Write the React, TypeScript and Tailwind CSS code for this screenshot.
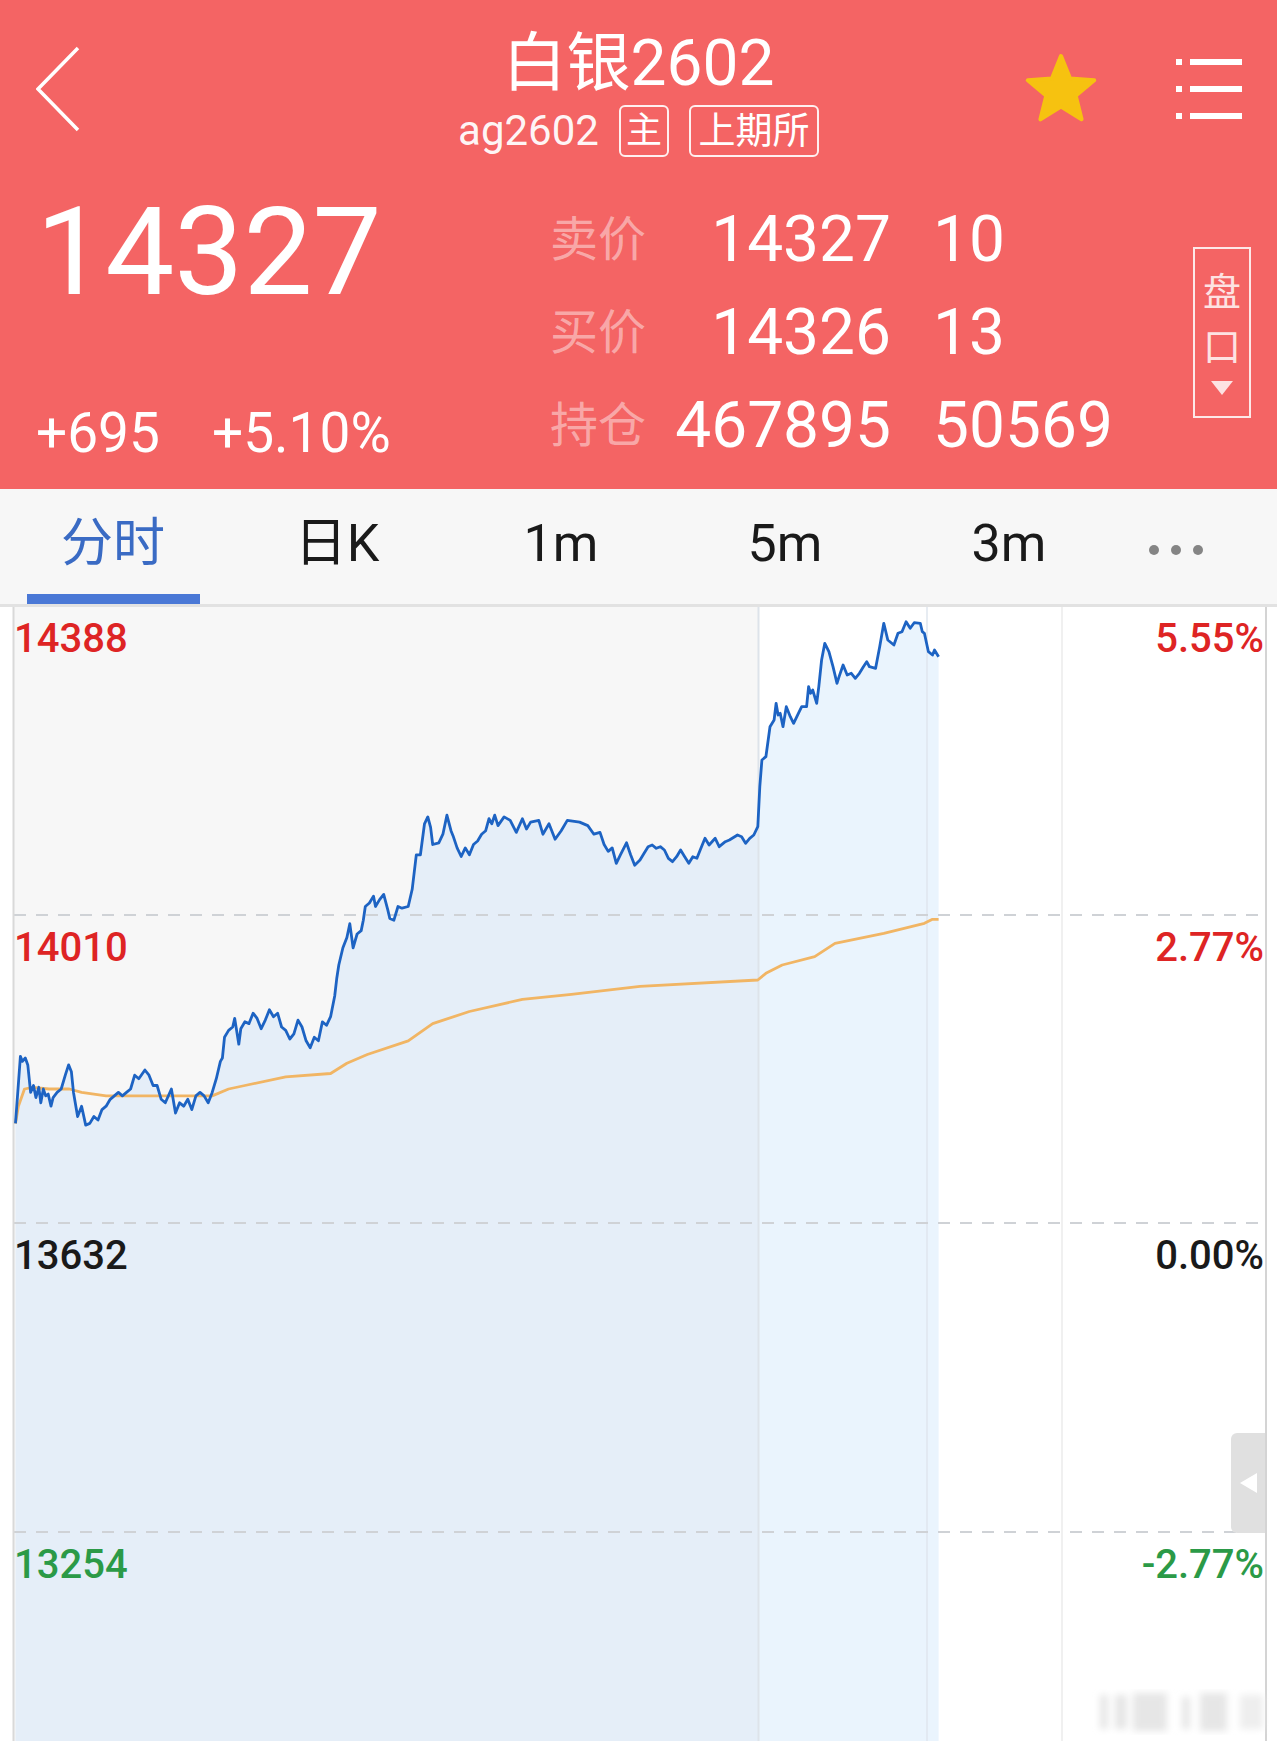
const tabs = ["分时", "日K", "1m", "5m", "3m"];

const quotes = [
  { label: "卖价", price: "14327", vol: "10" },
  { label: "买价", price: "14326", vol: "13" },
  { label: "持仓", price: "467895", vol: "50569" },
];

const scale = [
  { price: "14388", pct: "5.55%", color: "text-[#de2424]" },
  { price: "14010", pct: "2.77%", color: "text-[#de2424]" },
  { price: "13632", pct: "0.00%", color: "text-[#1a1a1a]" },
  { price: "13254", pct: "-2.77%", color: "text-[#2b9a47]" },
];

// traced from the reference, two passes (left half / right half), page coords after mapping
const blueLeft = [
  [38, 1520], [50, 1325], [55, 1340], [62, 1330], [68, 1350], [75, 1430], [82, 1410], [88, 1445], [95, 1415],
  [100, 1460], [106, 1420], [112, 1440], [118, 1435], [125, 1470], [130, 1445], [140, 1430], [150, 1420],
  [160, 1380], [168, 1350], [175, 1370], [180, 1430], [190, 1500], [200, 1470], [210, 1525], [220, 1520],
  [230, 1500], [240, 1510], [250, 1480], [260, 1470], [270, 1450], [280, 1440], [290, 1430], [300, 1440],
  [310, 1430], [320, 1420], [330, 1380], [340, 1390], [355, 1365], [365, 1380], [375, 1410], [385, 1410],
  [395, 1450], [405, 1460], [420, 1420], [430, 1490], [440, 1460], [450, 1470], [460, 1450], [470, 1480],
  [480, 1440], [490, 1430], [500, 1440], [510, 1460], [520, 1430], [530, 1390], [540, 1340], [545, 1330],
  [550, 1270], [560, 1250], [570, 1240], [575, 1215], [585, 1290], [590, 1245], [600, 1225], [610, 1230],
  [620, 1200], [630, 1215], [640, 1245], [650, 1220], [660, 1190], [670, 1210], [680, 1200], [690, 1240],
  [700, 1250], [710, 1275], [720, 1260], [730, 1220], [740, 1240], [750, 1280], [760, 1300], [770, 1270],
  [780, 1280], [790, 1225], [800, 1235], [810, 1210], [820, 1150], [825, 1100], [830, 1060], [840, 1010],
  [850, 980], [857, 940], [865, 1010], [875, 970], [885, 960], [890, 930], [895, 890], [905, 880], [915, 860],
  [920, 890], [930, 870], [940, 855], [950, 900], [955, 925], [965, 930], [975, 890], [985, 895], [1000, 890],
  [1010, 840], [1020, 740], [1030, 740], [1040, 650], [1048, 630], [1055, 660], [1060, 710], [1075, 705],
  [1085, 680], [1095, 625], [1105, 670], [1110, 685], [1120, 720], [1130, 745], [1140, 720], [1150, 740],
  [1160, 710], [1170, 700], [1180, 680], [1190, 670], [1198, 635], [1205, 650], [1212, 625], [1220, 655],
  [1235, 630], [1250, 640], [1265, 675], [1280, 635], [1290, 665], [1300, 645], [1320, 640], [1330, 680],
  [1345, 650], [1360, 695], [1375, 670], [1390, 640], [1420, 645], [1440, 655], [1455, 680], [1470, 675],
  [1480, 710], [1490, 730], [1500, 720], [1510, 765], [1520, 740], [1535, 705], [1545, 740], [1555, 770],
];

const blueRight = [
  [0, 780], [10, 760], [20, 740], [30, 735], [40, 745], [50, 740], [60, 750], [70, 775], [80, 785], [90, 770],
  [100, 750], [110, 770], [120, 790], [130, 770], [140, 775], [150, 745], [160, 715], [170, 735], [185, 715],
  [195, 740], [210, 725], [220, 720], [240, 705], [250, 710], [260, 730], [270, 715], [280, 705], [290, 680],
  [295, 560], [300, 480], [310, 470], [320, 380], [330, 360], [335, 310], [340, 345], [345, 340], [352, 380],
  [360, 320], [370, 350], [378, 370], [390, 340], [398, 320], [410, 320], [415, 260], [420, 280], [425, 270],
  [435, 310], [440, 260], [447, 180], [455, 130], [465, 155], [475, 200], [485, 250], [490, 230], [500, 195],
  [510, 225], [520, 220], [530, 235], [540, 220], [550, 200], [558, 185], [565, 200], [580, 205], [590, 140],
  [600, 70], [610, 120], [625, 135], [635, 100], [645, 95], [655, 65], [665, 85], [675, 68], [690, 70],
  [695, 95], [700, 100], [710, 155], [720, 165], [725, 150], [735, 170],
];

const avgLeft = [
  [38, 1520], [45, 1470], [60, 1420], [80, 1415], [120, 1420], [170, 1420], [200, 1430], [260, 1440],
  [400, 1440], [520, 1440], [560, 1420], [600, 1410], [700, 1385], [810, 1375], [850, 1345], [900, 1320],
  [1000, 1280], [1060, 1230], [1150, 1195], [1280, 1160], [1400, 1145], [1568, 1122],
];

const avgRight = [
  [290, 1140], [310, 1120], [350, 1095], [430, 1070], [480, 1030], [600, 1000], [700, 970], [720, 958], [735, 958],
];

const fromLeft = ([x, y]: number[]) => [x / 2.45, y / 2.904 - 7];
const fromRight = ([x, y]: number[]) => [640 + x / 2.4615, y / 3 - 7];

const blue = [...blueLeft.map(fromLeft), ...blueRight.map(fromRight)];
const avg = [...avgLeft.map(fromLeft), ...avgRight.map(fromRight)];
const toPoints = (pts: number[][]) => pts.map(([x, y]) => `${x.toFixed(1)},${y.toFixed(1)}`).join(" ");
const last = blue[blue.length - 1];
const area = toPoints([...blue, [last[0], 1134], [blue[0][0], 1134]]);

function Chart() {
  return (
    <svg className="absolute inset-0" width="1277" height="1134" viewBox="0 0 1277 1134">
      <defs>
        <clipPath id="area">
          <polygon points={area} />
        </clipPath>
        <filter id="soft">
          <feGaussianBlur stdDeviation="3.5" />
        </filter>
      </defs>
      <rect x="14" y="0" width="744" height="1134" fill="#f7f7f7" />
      <g clipPath="url(#area)">
        <rect x="14" y="0" width="744" height="1134" fill="#e5eef8" />
        <rect x="758" y="0" width="181" height="1134" fill="#eaf4fd" />
      </g>
      <line x1="758.5" y1="0" x2="758.5" y2="1134" stroke="#dde3ea" strokeWidth="2" />
      <line x1="927" y1="0" x2="927" y2="1134" stroke="#dfe6ee" strokeWidth="1.5" />
      <line x1="1062" y1="0" x2="1062" y2="1134" stroke="#f0f0f0" strokeWidth="2" />
      {[308, 616, 925].map((y) => (
        <line key={y} x1="14" y1={y} x2="1265" y2={y} stroke="#cfd2d6" strokeWidth="2" strokeDasharray="12 10" />
      ))}
      <line x1="13.5" y1="0" x2="13.5" y2="1134" stroke="#d9d9d9" strokeWidth="2" />
      <line x1="1266" y1="0" x2="1266" y2="1134" stroke="#d4d4d4" strokeWidth="2" />
      <polyline points={toPoints(avg)} fill="none" stroke="#f1b564" strokeWidth="2.8" strokeLinejoin="round" />
      <polyline points={toPoints(blue)} fill="none" stroke="#1d63c3" strokeWidth="2.8" strokeLinejoin="round" />
      <g filter="url(#soft)" fill="#e6e6e6">
        <rect x="1100" y="1088" width="8" height="34" />
        <rect x="1115" y="1088" width="12" height="34" />
        <rect x="1133" y="1086" width="34" height="38" />
        <rect x="1182" y="1090" width="8" height="32" />
        <rect x="1200" y="1086" width="27" height="38" />
        <rect x="1240" y="1088" width="23" height="34" fill="#eeeeee" />
      </g>
    </svg>
  );
}

export default function App() {
  return (
    <div className="w-[1277px] h-[1741px] overflow-hidden bg-white font-['Roboto','Noto_Sans_CJK_SC',sans-serif]">
      {/* Header */}
      <header className="h-[489px] bg-[#f46464] text-white">
        <div className="grid grid-cols-3 h-[170px]">
          <div className="pl-[36px] pt-[46px]">
            <svg width="44" height="86" viewBox="0 0 44 86">
              <polyline points="42,2 2,43 42,84" fill="none" stroke="white" strokeWidth="3.5" />
            </svg>
          </div>

          <div className="flex flex-col items-center pt-[32px]">
            <div className="text-[64px] leading-[64px]">白银2602</div>
            <div className="mt-[9px] flex items-center gap-[20px]">
              <span className="text-[42px] leading-[52px] text-white/95">ag2602</span>
              <span className="w-[50px] h-[52px] border-2 border-white/90 rounded-[6px] flex items-center justify-center text-[36px] leading-none">
                主
              </span>
              <span className="w-[130px] h-[52px] border-2 border-white/90 rounded-[6px] flex items-center justify-center text-[37px] leading-none">
                上期所
              </span>
            </div>
          </div>

          <div className="flex justify-end items-start pt-[53px] pr-[35px] gap-[77px]">
            <svg width="76" height="72" viewBox="0 0 74 70">
              <polygon
                points="37,3 45.8,24.9 69.3,26.5 51.3,41.6 57,64.5 37,52 17,64.5 22.7,41.6 4.7,26.5 28.2,24.9"
                fill="#f6c210"
                stroke="#f6c210"
                strokeWidth="4"
                strokeLinejoin="round"
              />
            </svg>
            <svg className="mt-[6px]" width="66" height="60" viewBox="0 0 66 60">
              {[0, 27, 54].map((y) => (
                <g key={y} fill="white">
                  <rect x="0" y={y} width="6" height="6" />
                  <rect x="14" y={y} width="52" height="6" />
                </g>
              ))}
            </svg>
          </div>
        </div>

        <div className="flex h-[319px]">
          <div className="w-[550px] pl-[36px] pt-[21px]">
            <div className="text-[123px] leading-[123px]">14327</div>
            <div className="mt-[92px] flex gap-[52px] text-[55px] leading-[55px]">
              <span>+695</span>
              <span>+5.10%</span>
            </div>
          </div>

          <div className="pt-[23px] flex flex-col">
            {quotes.map((q) => (
              <div key={q.label} className="h-[93px] flex items-center">
                <span className="w-[96px] text-[48px] leading-none text-white/45">{q.label}</span>
                <span className="w-[245px] text-right text-[64px] leading-none">{q.price}</span>
                <span className="pl-[42px] text-[64px] leading-none">{q.vol}</span>
              </div>
            ))}
          </div>

          <div className="ml-auto mr-[26px] mt-[77px] w-[58px] h-[171px] border-2 border-white/85 flex flex-col items-center pt-[24px] text-[38px] leading-[38px] text-[#fde2e2]">
            <span>盘</span>
            <span className="mt-[17px]">口</span>
            <svg className="mt-[15px]" width="22" height="14" viewBox="0 0 22 14">
              <polygon points="0,0 22,0 11,14" fill="#fde2e2" />
            </svg>
          </div>
        </div>
      </header>

      {/* Tabs */}
      <nav className="h-[118px] bg-[#f7f7f7] border-b-[3px] border-[#e2e2e2] flex pl-[1px]">
        {tabs.map((t, i) => (
          <div key={t} className="w-[224px] flex flex-col items-center">
            <span className={`mt-[29px] text-[52px] leading-[52px] ${i === 0 ? "text-[#3a6bc4]" : "text-[#1a1a1a]"}`}>
              {t}
            </span>
            {i === 0 && <span className="mt-auto w-[173px] h-[10px] bg-[#4a78d6]" />}
          </div>
        ))}
        <div className="w-[110px] flex justify-center gap-[12px] pt-[56px]">
          <span className="w-[10px] h-[10px] rounded-full bg-[#858585]" />
          <span className="w-[10px] h-[10px] rounded-full bg-[#858585]" />
          <span className="w-[10px] h-[10px] rounded-full bg-[#858585]" />
        </div>
      </nav>

      {/* Chart */}
      <div className="relative h-[1134px]">
        <Chart />
        <div className="relative flex flex-col">
          {scale.map((s) => (
            <div
              key={s.price}
              className={`h-[308.5px] flex justify-between pl-[14px] pr-[13px] pt-[12px] text-[40px] leading-[40px] font-medium ${s.color}`}
            >
              <span>{s.price}</span>
              <span>{s.pct}</span>
            </div>
          ))}
        </div>
        <div className="absolute left-[1231px] top-[826px] w-[34px] h-[100px] bg-[#e0e0e0] rounded-l-[6px] flex items-center justify-center">
          <svg width="17" height="20" viewBox="0 0 17 20">
            <polygon points="17,0 17,20 0,10" fill="white" />
          </svg>
        </div>
      </div>
    </div>
  );
}
